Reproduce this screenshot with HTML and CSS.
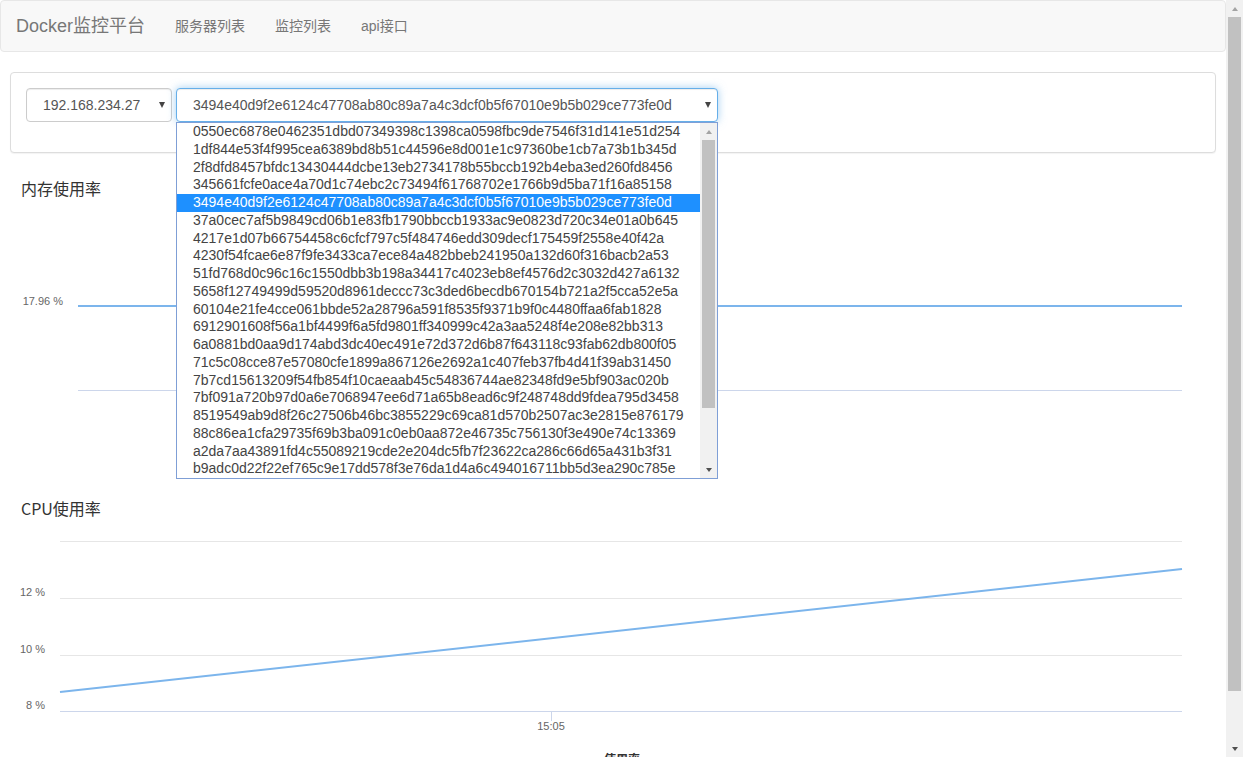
FILE: index.html
```html
<!DOCTYPE html>
<html lang="zh-CN">
<head>
<meta charset="utf-8">
<title>Docker监控平台</title>
<link rel="stylesheet" href="styles.css">
</head>
<body>
<div class="viewport">
  <div class="page">
    <nav class="navbar">
      <a class="brand">Docker监控平台</a>
      <ul class="nav">
        <li><a>服务器列表</a></li>
        <li><a>监控列表</a></li>
        <li><a>api接口</a></li>
      </ul>
    </nav>

    <div class="panel">
      <div class="form-row">
        <div class="select sel-host"><span>192.168.234.27</span><i class="caret"></i></div>
        <div class="select-wrap">
          <div class="select sel-container"><span>3494e40d9f2e6124c47708ab80c89a7a4c3dcf0b5f67010e9b5b029ce773fe0d</span><i class="caret"></i></div>
          <div class="dropdown">
            <div class="options">
              <div class="opt">0550ec6878e0462351dbd07349398c1398ca0598fbc9de7546f31d141e51d254</div>
              <div class="opt">1df844e53f4f995cea6389bd8b51c44596e8d001e1c97360be1cb7a73b1b345d</div>
              <div class="opt">2f8dfd8457bfdc13430444dcbe13eb2734178b55bccb192b4eba3ed260fd8456</div>
              <div class="opt">345661fcfe0ace4a70d1c74ebc2c73494f61768702e1766b9d5ba71f16a85158</div>
              <div class="opt selected">3494e40d9f2e6124c47708ab80c89a7a4c3dcf0b5f67010e9b5b029ce773fe0d</div>
              <div class="opt">37a0cec7af5b9849cd06b1e83fb1790bbccb1933ac9e0823d720c34e01a0b645</div>
              <div class="opt">4217e1d07b66754458c6cfcf797c5f484746edd309decf175459f2558e40f42a</div>
              <div class="opt">4230f54fcae6e87f9fe3433ca7ece84a482bbeb241950a132d60f316bacb2a53</div>
              <div class="opt">51fd768d0c96c16c1550dbb3b198a34417c4023eb8ef4576d2c3032d427a6132</div>
              <div class="opt">5658f12749499d59520d8961deccc73c3ded6becdb670154b721a2f5cca52e5a</div>
              <div class="opt">60104e21fe4cce061bbde52a28796a591f8535f9371b9f0c4480ffaa6fab1828</div>
              <div class="opt">6912901608f56a1bf4499f6a5fd9801ff340999c42a3aa5248f4e208e82bb313</div>
              <div class="opt">6a0881bd0aa9d174abd3dc40ec491e72d372d6b87f643118c93fab62db800f05</div>
              <div class="opt">71c5c08cce87e57080cfe1899a867126e2692a1c407feb37fb4d41f39ab31450</div>
              <div class="opt">7b7cd15613209f54fb854f10caeaab45c54836744ae82348fd9e5bf903ac020b</div>
              <div class="opt">7bf091a720b97d0a6e7068947ee6d71a65b8ead6c9f248748dd9fdea795d3458</div>
              <div class="opt">8519549ab9d8f26c27506b46bc3855229c69ca81d570b2507ac3e2815e876179</div>
              <div class="opt">88c86ea1cfa29735f69b3ba091c0eb0aa872e46735c756130f3e490e74c13369</div>
              <div class="opt">a2da7aa43891fd4c55089219cde2e204dc5fb7f23622ca286c66d65a431b3f31</div>
              <div class="opt">b9adc0d22f22ef765c9e17dd578f3e76da1d4a6c494016711bb5d3ea290c785e</div>
            </div>
            <div class="vscroll dd-scroll">
              <div class="sb-btn"><i class="arrow-up"></i></div>
              <div class="sb-thumb dd-thumb"></div>
              <div class="sb-track"></div>
              <div class="sb-btn"><i class="arrow-down"></i></div>
            </div>
          </div>
        </div>
      </div>
    </div>

    <section class="chart mem">
      <h4 class="chart-title">内存使用率</h4>
      <svg class="plot" width="1226" height="298" viewBox="0 0 1226 298">
        <line class="axis" x1="78" y1="191.5" x2="1182" y2="191.5"/>
        <text class="ylab" x="63" y="106" text-anchor="end">17.96 %</text>
        <line class="series" x1="78" y1="107" x2="1182" y2="107"/>
      </svg>
    </section>

    <section class="chart">
      <h4 class="chart-title">CPU使用率</h4>
      <svg class="plot" width="1226" height="260" viewBox="0 0 1226 260">
        <line class="grid" x1="60" y1="22.5" x2="1182" y2="22.5"/>
        <line class="grid" x1="60" y1="79.5" x2="1182" y2="79.5"/>
        <line class="grid" x1="60" y1="136.5" x2="1182" y2="136.5"/>
        <line class="axis" x1="60" y1="192.5" x2="1182" y2="192.5"/>
        <line class="axis" x1="551.5" y1="192" x2="551.5" y2="202"/>
        <text class="ylab" x="45" y="77" text-anchor="end">12 %</text>
        <text class="ylab" x="45" y="134" text-anchor="end">10 %</text>
        <text class="ylab" x="45" y="190" text-anchor="end">8 %</text>
        <text class="xlab" x="551" y="211" text-anchor="middle">15:05</text>
        <line class="series" x1="60" y1="173" x2="1182" y2="50"/>
        <text class="legend" x="622" y="245" text-anchor="middle">使用率</text>
      </svg>
    </section>
  </div>

  <div class="vscroll page-scroll">
    <div class="sb-btn"><i class="arrow-up"></i></div>
    <div class="sb-thumb page-thumb"></div>
    <div class="sb-track"></div>
    <div class="sb-btn"><i class="arrow-down"></i></div>
  </div>
</div>
</body>
</html>
```

FILE: styles.css
```css
* { box-sizing: border-box; }

html, body {
  margin: 0;
  padding: 0;
  height: 100%;
  overflow: hidden;
  background: #fff;
}

body {
  font-family: "Liberation Sans", "Noto Sans CJK SC", sans-serif;
  font-size: 14px;
  color: #333;
}

.viewport {
  display: flex;
  width: 1243px;
  height: 757px;
}

.page {
  width: 1226px;
  height: 757px;
  overflow: hidden;
  position: relative;
}

/* navbar */
.navbar {
  display: flex;
  align-items: flex-start;
  height: 52px;
  background: #f8f8f8;
  border: 1px solid #e7e7e7;
  border-radius: 4px;
  margin-bottom: 20px;
}

.brand {
  padding: 15px;
  font-size: 18px;
  line-height: 20px;
  color: #777;
}

.nav {
  display: flex;
  list-style: none;
  margin: 0;
  padding: 0;
}

.nav a {
  display: block;
  padding: 15px;
  font-size: 14px;
  line-height: 20px;
  color: #777;
}

/* panel */
.panel {
  margin: 0 10px;
  border: 1px solid #ddd;
  border-radius: 4px;
  padding: 15px;
  background: #fff;
  box-shadow: 0 1px 1px rgba(0, 0, 0, .05);
}

.form-row {
  display: flex;
  gap: 4px;
  margin-bottom: 15px;
}

.select {
  position: relative;
  height: 34px;
  display: flex;
  align-items: center;
  padding: 0 16px;
  border: 1px solid #ccc;
  border-radius: 4px;
  background: #fff;
  color: #555;
  font-size: 14px;
  white-space: nowrap;
  box-shadow: inset 0 1px 1px rgba(0, 0, 0, .075);
}

.sel-host { width: 146px; }

.select-wrap {
  position: relative;
  width: 542px;
}

.sel-container {
  width: 542px;
  border-color: #66afe9;
  box-shadow: inset 0 1px 1px rgba(0, 0, 0, .075), 0 0 8px rgba(102, 175, 233, .6);
}

.caret {
  position: absolute;
  right: 6px;
  top: 13px;
  width: 0;
  height: 0;
  border-left: 3.5px solid transparent;
  border-right: 3.5px solid transparent;
  border-top: 6px solid #444;
}

/* open dropdown */
.dropdown {
  position: absolute;
  left: 0;
  top: 34px;
  width: 542px;
  height: 357px;
  border: 1px solid #7f9fd6;
  background: #fff;
  display: flex;
  z-index: 10;
}

.options {
  flex: 1;
  overflow: hidden;
}

.opt {
  height: 17.75px;
  line-height: 17.75px;
  padding-left: 16px;
  white-space: nowrap;
  color: #444;
  font-size: 14px;
}

.opt.selected {
  background: #1e90ff;
  color: #fff;
}

/* scrollbars */
.vscroll {
  width: 17px;
  flex: none;
  background: #f1f1f1;
  display: flex;
  flex-direction: column;
  align-items: center;
}

.sb-btn {
  width: 17px;
  height: 17px;
  flex: none;
  display: flex;
  align-items: center;
  justify-content: center;
}

.sb-thumb {
  width: 13px;
  flex: none;
  background: #c1c1c1;
}

.dd-thumb { height: 268px; }
.page-thumb { height: 674px; }

.sb-track { flex: 1; }

.page-scroll { height: 757px; }

.arrow-up {
  width: 0;
  height: 0;
  border-left: 3.5px solid transparent;
  border-right: 3.5px solid transparent;
  border-bottom: 4px solid #a3a3a3;
}

.arrow-down {
  width: 0;
  height: 0;
  border-left: 3.5px solid transparent;
  border-right: 3.5px solid transparent;
  border-top: 4px solid #505050;
}

/* charts */
.chart-title {
  margin: 0;
  padding-left: 21px;
  font-family: "Noto Sans CJK SC", "Liberation Sans", sans-serif;
  font-size: 16px;
  line-height: 22px;
  font-weight: normal;
  color: #333;
}

.mem { margin-top: 24px; }

.plot { display: block; }

.grid { stroke: #e6e6e6; stroke-width: 1; }
.axis { stroke: #ccd6eb; stroke-width: 1; }
.series { stroke: #7cb5ec; stroke-width: 2; fill: none; }

.ylab, .xlab {
  font-family: "Liberation Sans", "Noto Sans CJK SC", sans-serif;
  font-size: 11px;
  fill: #666;
}

.legend {
  font-family: "Noto Sans CJK SC", sans-serif;
  font-size: 12px;
  font-weight: bold;
  fill: #333;
}
```
